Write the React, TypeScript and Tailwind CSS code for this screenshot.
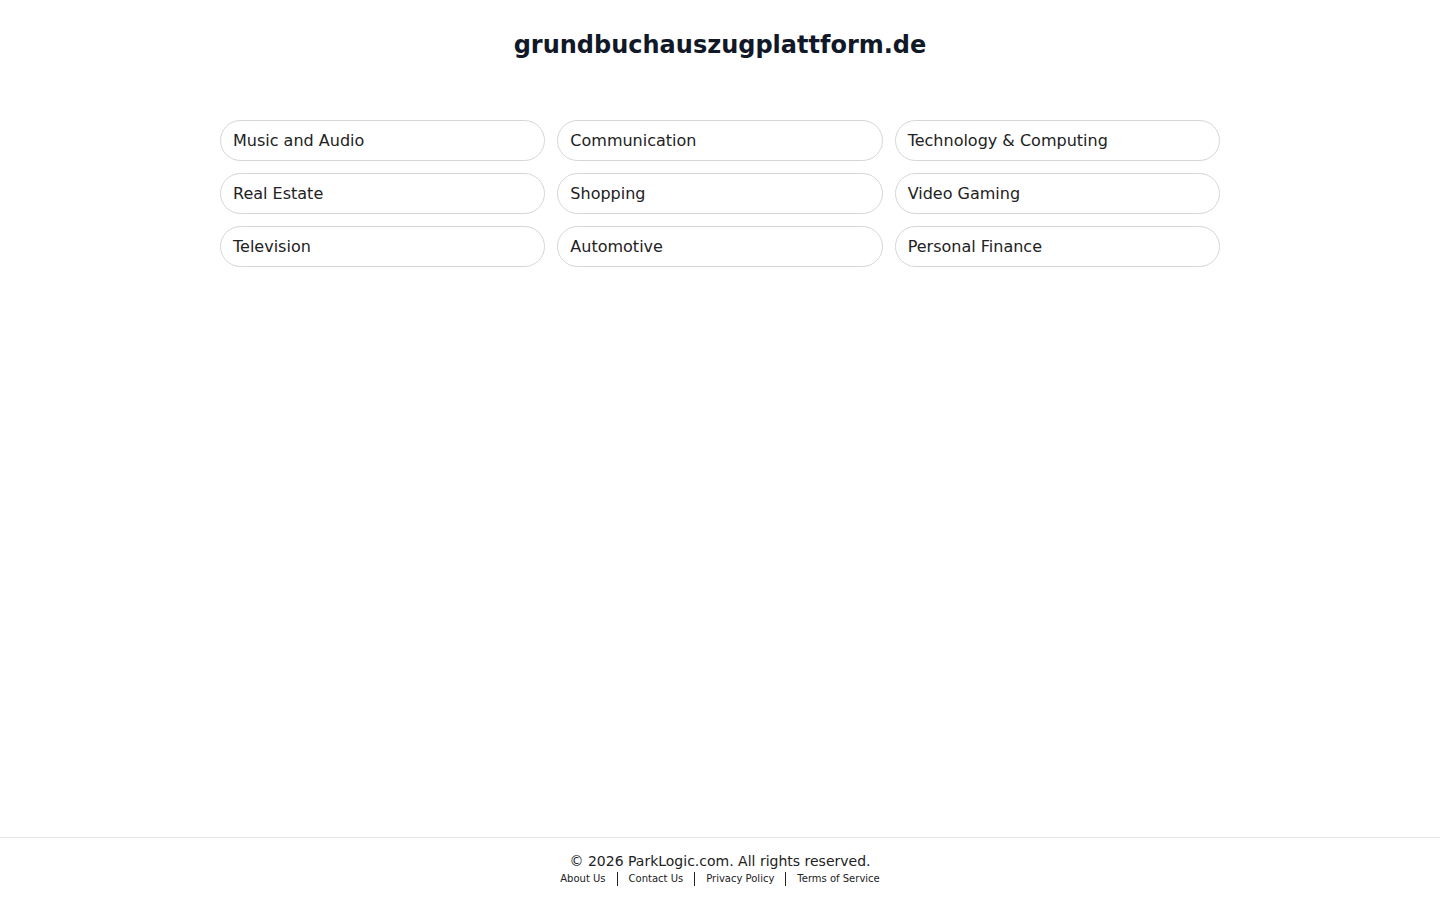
const categories = [
  'Music and Audio',
  'Communication',
  'Technology & Computing',
  'Real Estate',
  'Shopping',
  'Video Gaming',
  'Television',
  'Automotive',
  'Personal Finance',
];

const links = ['About Us', 'Contact Us', 'Privacy Policy', 'Terms of Service'];

export default function App() {
  return (
    <div className="flex min-h-screen flex-col bg-white font-['DejaVu_Sans',sans-serif]">
      <main className="flex-1">
        <h1 className="pt-[29px] text-center text-2xl leading-8 font-bold text-[#111827]">
          grundbuchauszugplattform.de
        </h1>
        <div className="mx-auto mt-[59px] grid w-[1000px] grid-cols-3 gap-3">
          {categories.map((c) => (
            <a
              key={c}
              href="#"
              className="flex h-[41px] items-center rounded-full border border-[#d6d6d6] px-[12px] text-base text-[#222]"
            >
              {c}
            </a>
          ))}
        </div>
      </main>
      <footer className="border-t border-[#e5e5e5] pt-[13px] pb-[14px] text-center text-[#222]">
        <p className="text-sm leading-5">© 2026 ParkLogic.com. All rights reserved.</p>
        <div className="mt-px flex justify-center text-[10px] leading-[14px]">
          {links.map((l, i) => (
            <a
              key={l}
              href="#"
              className={i === 0 ? 'pr-[11px]' : i === links.length - 1 ? 'border-l border-[#222] pl-[11px]' : 'border-l border-[#222] px-[11px]'}
            >
              {l}
            </a>
          ))}
        </div>
      </footer>
    </div>
  );
}
